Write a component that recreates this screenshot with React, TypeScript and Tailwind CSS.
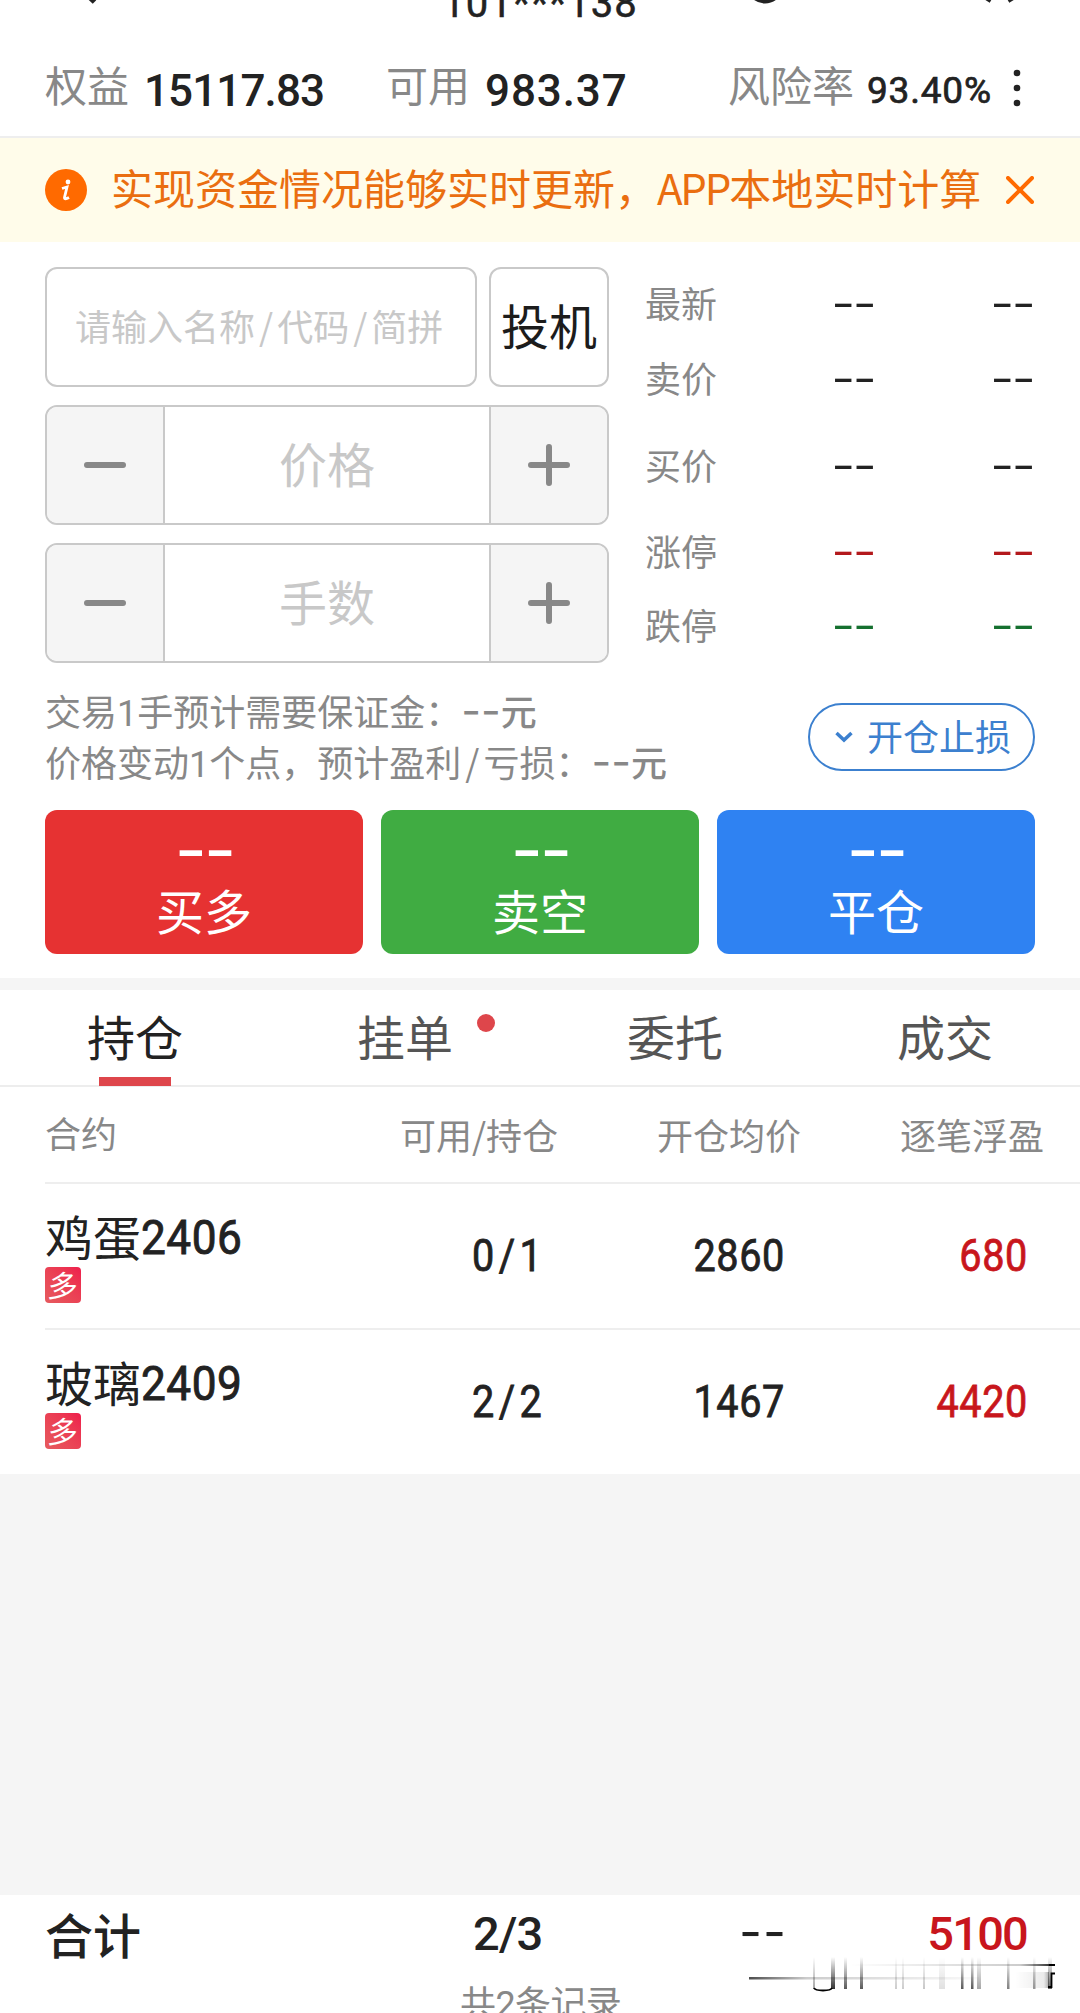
import { ReactNode } from "react";
import clsx from "clsx";

type Position = {
  name: string;
  code: string;
  available: number;
  total: number;
  price: string;
  profit: string;
};

const positions: Position[] = [
  { name: "鸡蛋", code: "2406", available: 0, total: 1, price: "2860", profit: "680" },
  { name: "玻璃", code: "2409", available: 2, total: 2, price: "1467", profit: "4420" },
];

const quotes = [
  { label: "最新", height: "h-[74px]", color: "text-[#222]" },
  { label: "卖价", height: "h-[75px]", color: "text-[#222]" },
  { label: "买价", height: "h-[99px]", color: "text-[#222]" },
  { label: "涨停", height: "h-[73px]", color: "text-[#b3191c]" },
  { label: "跌停", height: "h-[75px]", color: "text-[#15702f]" },
];

const actions = [
  { label: "买多", bg: "bg-[#e63232]" },
  { label: "卖空", bg: "bg-[#40ac42]" },
  { label: "平仓", bg: "bg-[#2f82f2]" },
];

const tabs = ["持仓", "挂单", "委托", "成交"];

// vertical strokes of the faded stamp: x, width, opacity
const stampStrokes = [
  [83, 2, 0.35],
  [101, 4, 0.8],
  [114, 3, 0.65],
  [130, 3, 0.65],
  [165, 2, 0.2],
  [172, 2, 0.2],
  [193, 2, 0.22],
  [209, 6, 0.12],
  [231, 2.5, 0.65],
  [241, 2.5, 0.65],
  [247, 4, 0.35],
  [277, 2.5, 0.5],
  [303, 2.5, 0.4],
  [318, 4, 0.6],
];

type NumProps = { children: ReactNode; className?: string };

function Num({ children, className }: NumProps) {
  return (
    <span className={clsx("font-['Roboto','Noto_Sans_CJK_SC',sans-serif]", className)}>
      {children}
    </span>
  );
}

function Dashes({ className }: { className?: string }) {
  return (
    <span className={clsx("font-['Inter',sans-serif] leading-none", className)}>
      --
    </span>
  );
}

function TopBar() {
  return (
    <div className="relative h-[26px] overflow-hidden">
      <svg className="absolute left-0 top-0" width="1080" height="12" fill="none" stroke="#222" strokeWidth="5">
        <path d="M86 -6 L94.5 2" />
        <circle cx="765" cy="-15" r="16" />
        <path d="M982 -5 L991 0.5 M1019 -6 L1008 0.5" />
      </svg>
      <div className="-mt-[24px] text-center leading-[56px]">
        <Num className="text-[40px] text-[#222] tracking-[1px] [-webkit-text-stroke:0.5px_#222]">101***138</Num>
      </div>
    </div>
  );
}

function Account() {
  return (
    <div className="flex h-[112px] items-center border-b-2 border-[#eeeeee] pl-[45px] pt-[14px] text-[42px] text-[#888] whitespace-nowrap">
      <div className="flex w-[341px] items-center">
        <span className="pb-[9px]">权益</span>
        <Num className="ml-[15px] pt-[6px] text-[44px] font-medium tracking-[-0.9px] text-[#222]">15117.83</Num>
      </div>
      <div className="flex w-[342px] items-center">
        <span className="pb-[9px]">可用</span>
        <Num className="ml-[15px] pt-[6px] text-[44px] font-medium tracking-[0.9px] text-[#222]">983.37</Num>
      </div>
      <span className="pb-[9px]">风险率</span>
      <Num className="ml-[13px] w-[126px] pt-[6px] text-[37px] tracking-[0.8px] text-[#222] [-webkit-text-stroke:0.7px_#222]">
        93.40%
      </Num>
      <svg className="ml-[19px]" width="10" height="38" fill="#222">
        <circle cx="5" cy="4" r="3.3" />
        <circle cx="5" cy="19" r="3.3" />
        <circle cx="5" cy="34" r="3.3" />
      </svg>
    </div>
  );
}

function Notice() {
  return (
    <div className="flex h-[104px] items-center bg-[#fffcea] pl-[45px] text-[42px] text-[#ea6e10] whitespace-nowrap">
      <svg width="42" height="42">
        <circle cx="21" cy="21" r="21" fill="#ff6a00" />
        <circle cx="23" cy="13" r="2.4" fill="#fff" />
        <path d="M17 19.5 L22 18 L19.5 28.5 Q19.5 31 24 28.5" fill="none" stroke="#fff" strokeWidth="2.8" />
      </svg>
      <span className="ml-[24px] w-[869px] pb-[7px]">
        实现资金情况能够实时更新，<span className="tracking-[-2.2px]">APP</span>本地实时计算
      </span>
      <svg className="ml-[26px]" width="28" height="28" stroke="#ff6a00" strokeWidth="4" strokeLinecap="round">
        <path d="M2 2 L26 26 M26 2 L2 26" />
      </svg>
    </div>
  );
}

function Stepper({ label }: { label: string }) {
  return (
    <div className="flex h-[120px] overflow-hidden rounded-[12px] border-2 border-[#c9c9c9]">
      <button className="flex w-[116px] items-center justify-center bg-[#f5f5f5]">
        <span className="h-[6px] w-[42px] rounded-full bg-[#888]" />
      </button>
      <div className="flex flex-1 items-center justify-center border-x-2 border-[#c9c9c9] pb-[6px] text-[48px] text-[#c8c8c8]">
        {label}
      </div>
      <button className="flex w-[116px] items-center justify-center bg-[#f5f5f5]">
        <svg width="42" height="42" stroke="#888" strokeWidth="6" strokeLinecap="round">
          <path d="M3 21 H39 M21 3 V39" />
        </svg>
      </button>
    </div>
  );
}

function OrderForm() {
  return (
    <div className="flex pl-[45px] pr-[45px] pt-[25px]">
      <div className="flex w-[564px] flex-col gap-[18px]">
        <div className="flex h-[120px] gap-[12px]">
          <div className="flex w-[432px] items-center rounded-[12px] border-2 border-[#c9c9c9] pb-[5px] pl-[28px] text-[36px] text-[#c8c8c8] whitespace-nowrap">
            请输入名称<span className="px-[4px]">/</span>代码<span className="px-[4px]">/</span>简拼
          </div>
          <div className="flex w-[120px] items-center justify-center rounded-[12px] border-2 border-[#c9c9c9] pb-[6px] text-[48px] text-[#1c1c1c]">
            投机
          </div>
        </div>
        <Stepper label="价格" />
        <Stepper label="手数" />
      </div>
      <div className="ml-[36px] flex-1">
        {quotes.map((q) => (
          <div key={q.label} className={clsx("flex items-center text-[36px] text-[#888]", q.height)}>
            <span className="w-[186px] pb-[4px]">{q.label}</span>
            <Dashes className={clsx("w-[159px] pb-[2px] text-[54px] font-light tracking-[-3px]", q.color)} />
            <Dashes className={clsx("pb-[2px] text-[54px] font-light tracking-[-3px]", q.color)} />
          </div>
        ))}
      </div>
    </div>
  );
}

function Estimate() {
  return (
    <div className="flex h-[147px] items-center justify-between px-[45px] text-[36px] leading-[51px] text-[#888] whitespace-nowrap">
      <div className="-mt-[2px]">
        <p className="h-[51px]">
          交易<Num>1</Num>手预计需要保证金：
          <Dashes className="text-[43px]" />
          <span className="font-medium">元</span>
        </p>
        <p className="h-[51px]">
          价格变动<Num>1</Num>个点，预计盈利<span className="px-[4px]">/</span>亏损：
          <Dashes className="text-[43px]" />
          <span className="font-medium">元</span>
        </p>
      </div>
      <button className="flex h-[68px] w-[227px] items-center rounded-full border-2 border-[#3c80cf] pl-[25px] text-[#3c80cf]">
        <svg width="18" height="12" fill="none" stroke="#3c80cf" strokeWidth="3.5">
          <path d="M1.5 2 L9 9 L16.5 2" />
        </svg>
        <span className="ml-[14px] pb-[3px]">开仓止损</span>
      </button>
    </div>
  );
}

function Actions() {
  return (
    <div className="flex h-[168px] gap-[18px] px-[45px]">
      {actions.map((a) => (
        <button
          key={a.label}
          className={clsx("flex h-[144px] flex-1 flex-col items-center rounded-[12px] text-white", a.bg)}
        >
          <Dashes className="mt-[5px] h-[64px] text-[70px] tracking-[-3px]" />
          <span className="text-[48px] leading-[60px]">{a.label}</span>
        </button>
      ))}
    </div>
  );
}

function Tabs() {
  return (
    <div className="flex h-[97px] border-b-2 border-[#ededed]">
      {tabs.map((tab, i) => (
        <div
          key={tab}
          className={clsx(
            "relative flex w-[270px] justify-center text-[48px] leading-[90px]",
            i === 0 ? "text-[#222]" : "text-[#555]"
          )}
        >
          {tab}
          {i === 0 && <span className="absolute -bottom-[1px] h-[9px] w-[72px] bg-[#de464b]" />}
          {i === 1 && <span className="absolute left-[207px] top-[24px] size-[18px] rounded-full bg-[#de464b]" />}
        </div>
      ))}
    </div>
  );
}

function PositionTable() {
  return (
    <div className="pl-[45px]">
      <div className="flex h-[97px] items-center border-b-2 border-[#eeeeee] pb-[2px] text-[36px] text-[#888] whitespace-nowrap">
        <span className="w-[355px] pb-[4px]">合约</span>
        <span className="w-[257px]">可用/持仓</span>
        <span className="w-[243px]">开仓均价</span>
        <span>逐笔浮盈</span>
      </div>
      {positions.map((p, i) => (
        <div
          key={p.code}
          className={clsx(
            "flex items-center text-[#222]",
            i === 0 ? "h-[146px] border-b-2 border-[#eeeeee]" : "h-[144px]"
          )}
        >
          <div className="w-[427px] pb-[5px]">
            <div className="flex h-[62px] items-center text-[48px]">
              <span className="pb-[2px]">{p.name}</span>
              <Num className="origin-left scale-x-92 pt-[5px] tracking-[0.6px] [-webkit-text-stroke:0.9px_#222]">
                {p.code}
              </Num>
            </div>
            <div className="flex size-[36px] items-center justify-center rounded-[4px] bg-linear-to-tr from-[#e65a5e] to-[#ee1c4c] text-[30px] leading-none text-white">
              <span className="-skew-x-6 pb-[2px]">多</span>
            </div>
          </div>
          <Num className="w-[180px] origin-left scale-x-90 text-[44px] tracking-[5px] [-webkit-text-stroke:0.8px_#222]">
            {p.available}/{p.total}
          </Num>
          <Num className="w-[133px] origin-right scale-x-90 text-right text-[44px] tracking-[0.7px] [-webkit-text-stroke:0.8px_#222]">
            {p.price}
          </Num>
          <Num className="w-[243px] origin-right scale-x-90 text-right text-[44px] tracking-[0.7px] text-[#c8161c] [-webkit-text-stroke:0.8px_#c8161c]">
            {p.profit}
          </Num>
        </div>
      ))}
    </div>
  );
}

function Stamp() {
  return (
    <svg className="absolute left-[730px] top-[55px]" width="340" height="60" fill="none">
      <defs>
        <linearGradient id="fadeDown" x1="0" y1="0" x2="0" y2="1">
          <stop offset="0" stopColor="#000" stopOpacity="0" />
          <stop offset="1" stopColor="#000" />
        </linearGradient>
        <linearGradient id="fadeRight">
          <stop offset="0" stopColor="#000" stopOpacity="0.7" />
          <stop offset="0.25" stopColor="#000" stopOpacity="0.2" />
          <stop offset="1" stopColor="#000" stopOpacity="0.02" />
        </linearGradient>
        <linearGradient id="fadeLeft">
          <stop offset="0" stopColor="#000" stopOpacity="0" />
          <stop offset="0.85" stopColor="#000" stopOpacity="0.2" />
          <stop offset="1" stopColor="#000" stopOpacity="0.8" />
        </linearGradient>
      </defs>
      <rect x="19" y="27" width="230" height="2.5" fill="url(#fadeRight)" />
      <rect x="120" y="14" width="200" height="2" fill="url(#fadeLeft)" />
      <rect x="285" y="22" width="34" height="16" fill="url(#fadeLeft)" opacity="0.4" />
      {stampStrokes.map(([x, w, o]) => (
        <rect key={x} x={x} y="7" width={w} height="32" fill="url(#fadeDown)" opacity={o} />
      ))}
      <path d="M84 38 Q85 40.5 93 40.5 Q101 40.5 102 38" stroke="#000" strokeWidth="1.8" />
      <path d="M319 15 H325 M325 23.5 H321.5 V37 H318" stroke="#000" strokeWidth="1.8" />
    </svg>
  );
}

function Summary() {
  return (
    <div className="relative h-[118px] overflow-hidden pl-[45px] text-[#222]">
      <div className="flex h-[78px] items-center text-[48px] font-medium">
        <span className="w-[428px] pb-[2px]">合计</span>
        <Num className="w-[266px] text-[47px] tracking-[-0.8px]">2/3</Num>
        <Dashes className="w-[92px] pb-[5px] text-[50px] font-normal tracking-[1px]" />
        <Num className="w-[196px] text-right text-[47px] tracking-[-1.8px] text-[#c8161c]">5100</Num>
      </div>
      <p className="ml-[415px] pt-[2px] text-[36px] leading-[52px] tracking-[-0.6px] text-[#888]">
        共<Num>2</Num>条记录
      </p>
      <Stamp />
    </div>
  );
}

export default function App() {
  return (
    <div className="flex h-[2013px] w-[1080px] flex-col overflow-hidden bg-[#f5f5f5] font-['Noto_Sans_CJK_SC',sans-serif]">
      <div className="bg-white">
        <TopBar />
        <Account />
        <Notice />
        <OrderForm />
        <Estimate />
        <Actions />
      </div>
      <div className="mt-[12px] bg-white">
        <Tabs />
        <PositionTable />
      </div>
      <div className="mt-auto bg-white">
        <Summary />
      </div>
    </div>
  );
}
